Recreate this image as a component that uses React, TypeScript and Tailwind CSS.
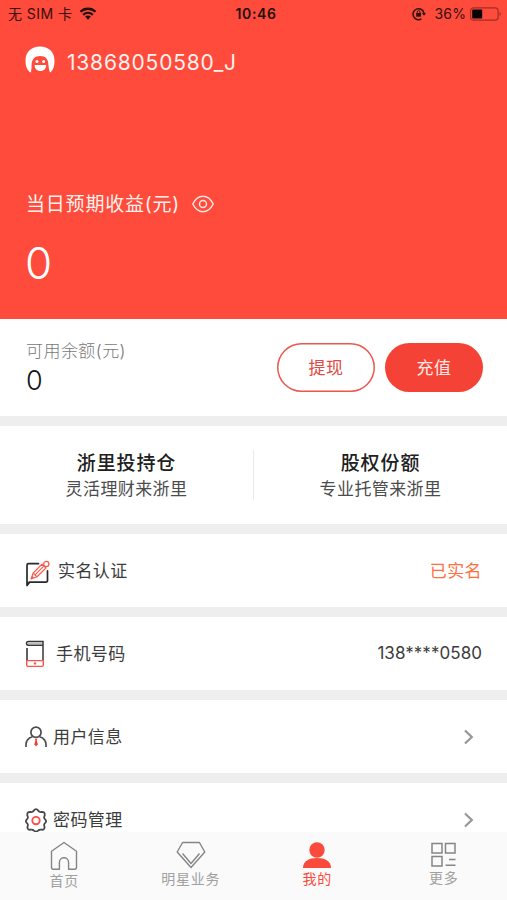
import type { ReactNode } from "react";

function Avatar() {
  return (
    <svg className="mb-[5px]" width="30" height="28" viewBox="0 0 30 28">
      <path d="M5.600 26.500C2 24.500 .5 20 .5 14.500C.5 6 6.500 .5 15 .5s14.500 5.500 14.500 14c0 5.500-1 9.500-4.300 12c-.8-1-1.200-3-1.700-7c0-6.500-3-9.500-8.300-9.500S6.600 13 6.600 19.500C6.500 22.500 6.300 25.500 5.600 26.500z" fill="#fff" />
      <circle cx="12" cy="15.400" r="1.500" fill="#fff" />
      <circle cx="18.600" cy="15.400" r="1.500" fill="#fff" />
      <path d="M9.600 19h11.600c0 3.800-2.400 6-5.800 6s-5.800-2.200-5.800-6z" fill="#fff" />
    </svg>
  );
}

function Wifi() {
  return (
    <svg width="18" height="13" viewBox="0 0 17 13" fill="none" stroke="#21100e" strokeWidth="2.300">
      <path d="M1 4.800C5.200.7 11.800.7 16 4.800M3.700 7.800c2.800-2.500 6.800-2.500 9.600 0" />
      <path d="M5.600 9.600c1.700-1.400 4.100-1.400 5.800 0L8.500 12.700z" fill="#21100e" stroke="none" />
    </svg>
  );
}

function RotationLock() {
  return (
    <svg width="14" height="14" viewBox="0 0 14 14" fill="none" stroke="#31100d" strokeWidth="1.500">
      <path d="M9.500 11.800A5.500 5.500 0 1 1 12 6.300" />
      <path d="M9.800 6.100h4.200L12 8.700z" fill="#31100d" stroke="none" />
      <rect x="4.200" y="6" width="4.800" height="3.700" fill="#31100d" stroke="none" />
      <path d="M5.200 6V5c0-1.900 2.800-1.900 2.800 0v1" strokeWidth="1" />
    </svg>
  );
}

function Battery() {
  return (
    <svg width="32" height="14" viewBox="0 0 32 14" fill="none">
      <rect x=".6" y=".8" width="27.500" height="12.400" rx="3" stroke="#9e3028" strokeWidth="1.200" />
      <rect x="2.200" y="2.400" width="10" height="9.200" rx="1" fill="#080303" />
      <path d="M29.500 5v4c1.800-.8 1.800-3.200 0-4z" fill="#9e3028" />
    </svg>
  );
}

function EditIcon() {
  return (
    <svg width="26" height="28" viewBox="0 0 26 28" fill="none" strokeLinecap="round" strokeLinejoin="round">
      <path d="M13.500 3.700H3.500C2.500 3.700 2 4.200 2 5.200v20.300l2.300-3.400h16.500c1.200 0 1.700-.5 1.700-1.600V10.800" stroke="#292929" strokeWidth="1.700" />
      <path d="M2 22v4.200l3-3.200z" fill="#292929" />
      <path d="M17 4.200 8.200 13 6 19l6-2.200L21 8M8.200 13l3.800 3.800M10.500 14.400l7.500-7.500M17 4.200 21 8" stroke="#f65c50" strokeWidth="1.200" />
      <path d="m6 19 1.100-3.200 2.100 2z" fill="#f65c50" />
      <circle cx="21.300" cy="4" r="2.600" stroke="#f65c50" strokeWidth="1.300" />
    </svg>
  );
}

function PhoneIcon() {
  return (
    <svg width="20" height="28" viewBox="0 0 20 28" fill="none">
      <path d="M18 5.200H3.200c-2.200 0-2.200-3.700 0-3.700H18V20" stroke="#383838" strokeWidth="1.500" />
      <path d="M2 8v12" stroke="#383838" strokeWidth="1.600" />
      <path d="M3 3.300h14" stroke="#aaa" strokeWidth="1" />
      <path d="M1.700 20.600h16.600v4.700c0 .8-.3 1.100-1.100 1.100H2.800c-.8 0-1.100-.3-1.100-1.100z" stroke="#f6564b" strokeWidth="1.400" />
      <circle cx="10" cy="23.400" r="1.200" fill="#f6564b" />
    </svg>
  );
}

function UserIcon() {
  return (
    <svg width="22" height="22" viewBox="0 0 22 22" fill="none" stroke="#4c4b52" strokeWidth="1.700">
      <circle cx="11" cy="6.200" r="5.100" />
      <path d="M1 21v-2.200c0-3.900 2.700-6.900 6.500-8M21 21v-2.200c0-3.900-2.700-6.900-6.500-8" />
      <path d="M9.900 12.800h2.400l-.5 1.600 1.100 4.200-1.800 1.600-1.800-1.600 1.100-4.200z" fill="#f33f32" stroke="none" />
    </svg>
  );
}

function GearIcon() {
  return (
    <svg width="22" height="24" viewBox="0 0 22 24" fill="none">
      <path d="M7.700 3.800c1.200-.8 1.400-2.700 3.300-2.700s2.100 1.900 3.300 2.700c1.500.8 3.500-.6 4.900.9 1.500 2-.1 3.200-.1 4.800 0 1.800 2 2 2 3.700s-2 2-2 3.500c0 1.600 1.200 3-.2 4.400-1.500 1.400-3.100 0-4.600.8-1.400.8-1.500 1.600-3.300 1.600s-1.900-.8-3.300-1.600c-1.500-.8-3.100.6-4.600-.8-1.400-1.400-.2-2.800-.2-4.400 0-1.500-2-1.800-2-3.500s2-1.900 2-3.700c0-1.600-1.600-2.800-.1-4.800 1.400-1.500 3.400-.1 4.900-.9z" stroke="#49474e" strokeWidth="1.800" />
      <circle cx="11" cy="12.600" r="3.700" stroke="#f65449" strokeWidth="1.900" />
    </svg>
  );
}

function HomeIcon() {
  return (
    <svg width="28" height="30" viewBox="0 0 28 30" fill="none" stroke="#858585" strokeWidth="1.400" strokeLinejoin="round">
      <path d="M14 1.500 1.500 10.300v15.900c0 1.400.5 2 1.900 2h6v-6.800c0-6.200 9.200-6.200 9.200 0v6.800h6c1.400 0 1.900-.6 1.900-2V10.300z" />
    </svg>
  );
}

function DiamondIcon() {
  return (
    <svg width="30" height="28" viewBox="0 0 30 28" fill="none" stroke="#858585" strokeWidth="1.400" strokeLinejoin="round">
      <path d="M6.600 1.500h16.800L28.800 11 15 26.500 1.200 11z" />
      <path d="m6.500 12.500 8.500 10 8.500-10" />
    </svg>
  );
}

function MineIcon() {
  return (
    <svg width="30" height="28" viewBox="0 0 30 28" fill="#fa4a3c">
      <circle cx="15" cy="9" r="7.700" />
      <path d="M1 27c0-7 6-10 14-10s14 3 14 10z" />
    </svg>
  );
}

function MoreIcon() {
  return (
    <svg width="26" height="26" viewBox="0 0 26 26" fill="none" stroke="#858585" strokeWidth="1.500">
      <rect x="1" y="1.500" width="10" height="9.500" />
      <rect x="14.500" y="1.500" width="9.500" height="9.500" />
      <rect x="1" y="14.500" width="10" height="9.500" />
      <path d="M18 17.500h6.500M14.500 23.300h10" />
    </svg>
  );
}

function Chevron() {
  return (
    <svg className="mr-2" width="11" height="16" viewBox="0 0 11 16" fill="none" stroke="#969696" strokeWidth="2.200">
      <path d="m2 1.500 6.800 6.500L2 14.500" />
    </svg>
  );
}

function Row({ icon, iconBox, label, children }: { icon: ReactNode; iconBox: string; label: string; children: ReactNode }) {
  return (
    <div className="mb-[10px] flex h-[73px] shrink-0 items-center bg-white pr-[25px] pl-[25px]">
      <div className={iconBox}>{icon}</div>
      <span className="flex-1 pt-[2px] text-[17px] tracking-[0.4px] text-[#3c3c3c]">{label}</span>
      {children}
    </div>
  );
}

function Tab({ icon, label, active, className }: { icon: ReactNode; label: string; active?: boolean; className: string }) {
  return (
    <div className={`flex flex-1 flex-col items-center text-[14px] leading-[20px] tracking-[0.7px] ${active ? "text-[#fa4a3c]" : "text-[#a0a0a0]"} ${className}`}>
      {icon}
      <span>{label}</span>
    </div>
  );
}

export default function App() {
  return (
    <div className="flex h-[900px] w-[507px] flex-col overflow-hidden bg-[#eeeeee] font-['Inter','Noto_Sans_CJK_SC',sans-serif]">
      <main className="flex h-[832px] shrink-0 flex-col overflow-hidden">
        <section className="h-[319px] shrink-0 bg-[#fe4b3b] text-[#fff1ee]">
          <div className="grid h-[27px] grid-cols-[1fr_auto_1fr] items-center pr-[5px] pl-2 text-[14px] leading-[20px] text-[#35100c]">
            <div className="flex items-center gap-[7px]">
              <span className="tracking-[0.45px]">无 SIM 卡</span>
              <Wifi />
            </div>
            <span className="pl-[2px] text-[14px] font-semibold tracking-[0.6px] text-[#21100e]">10:46</span>
            <div className="flex items-center justify-end">
              <RotationLock />
              <span className="mr-[4px] ml-[9px] tracking-[0.1px]">36%</span>
              <Battery />
            </div>
          </div>
          <div className="flex h-[70px] items-center gap-3 pl-[25px]">
            <Avatar />
            <span className="pt-px text-[21px] tracking-[0.8px]">13868050580_J</span>
          </div>
          <div className="mt-[92px] flex h-[30px] items-center gap-3 pl-[26px]">
            <span className="pt-[3px] text-[19px] tracking-[0.8px]">当日预期收益(元)</span>
            <svg width="22" height="18" viewBox="0 0 22 18" fill="none" stroke="#ffe5e1" strokeWidth="1.500">
              <path d="M.8 9C6-1.300 16-1.300 21.200 9C16 19.300 6 19.300.8 9z" />
              <circle cx="11" cy="9" r="3.500" />
            </svg>
          </div>
          <div className="mt-[19px] pl-[25px] text-[44px] leading-[50px] font-light text-white">0</div>
        </section>

        <section className="mb-[10px] flex h-[97px] shrink-0 items-center bg-white pr-[24px] pl-[26px]">
          <div className="flex-1">
            <div className="text-[17px] leading-[26px] font-light tracking-[0.45px] text-[#777]">可用余额(元)</div>
            <div className="text-[27px] leading-[34px] font-light text-[#151515]">0</div>
          </div>
          <div className="flex gap-[10px] text-[17px] tracking-[0.4px]">
            <button className="h-[49px] w-[98px] rounded-full pt-[2px] text-[#e04a42] ring-[1.5px] ring-[#e9594f] ring-inset">提现</button>
            <button className="h-[49px] w-[98px] rounded-full bg-[#f44336] pt-[2px] text-[#ffe9e6]">充值</button>
          </div>
        </section>

        <section className="mb-[10px] flex h-[98px] shrink-0 items-center bg-white pt-[3px] text-center">
          <div className="flex-1">
            <div className="text-[19px] leading-[26px] font-medium tracking-[0.9px] text-[#202020]">浙里投持仓</div>
            <div className="text-[17px] leading-[25px] tracking-[0.4px] text-[#4c4c4c]">灵活理财来浙里</div>
          </div>
          <div className="mb-[3px] h-[50px] w-px bg-[#e9e9e9]" />
          <div className="flex-1">
            <div className="text-[19px] leading-[26px] font-medium tracking-[0.9px] text-[#202020]">股权份额</div>
            <div className="text-[17px] leading-[25px] tracking-[0.4px] text-[#4c4c4c]">专业托管来浙里</div>
          </div>
        </section>

        <Row icon={<EditIcon />} iconBox="w-[33px] pt-[6px]" label="实名认证">
          <span className="pt-[2px] text-[17px] tracking-[0.4px] text-[#ff7142]">已实名</span>
        </Row>
        <Row icon={<PhoneIcon />} iconBox="w-[31px]" label="手机号码">
          <span className="pt-px text-[17px] tracking-[0.05px] text-[#3c3c3c]">138****0580</span>
        </Row>
        <Row icon={<UserIcon />} iconBox="w-[28px]" label="用户信息"><Chevron /></Row>
        <Row icon={<GearIcon />} iconBox="w-[28px]" label="密码管理"><Chevron /></Row>
      </main>

      <nav className="flex h-[68px] shrink-0 bg-[#fafafa] pl-px">
        <Tab className="pt-[9px]" icon={<HomeIcon />} label="首页" />
        <Tab className="pt-[9px]" icon={<DiamondIcon />} label="明星业务" />
        <Tab className="pt-[9px]" icon={<MineIcon />} label="我的" active />
        <Tab className="pt-[10px]" icon={<MoreIcon />} label="更多" />
      </nav>
    </div>
  );
}
